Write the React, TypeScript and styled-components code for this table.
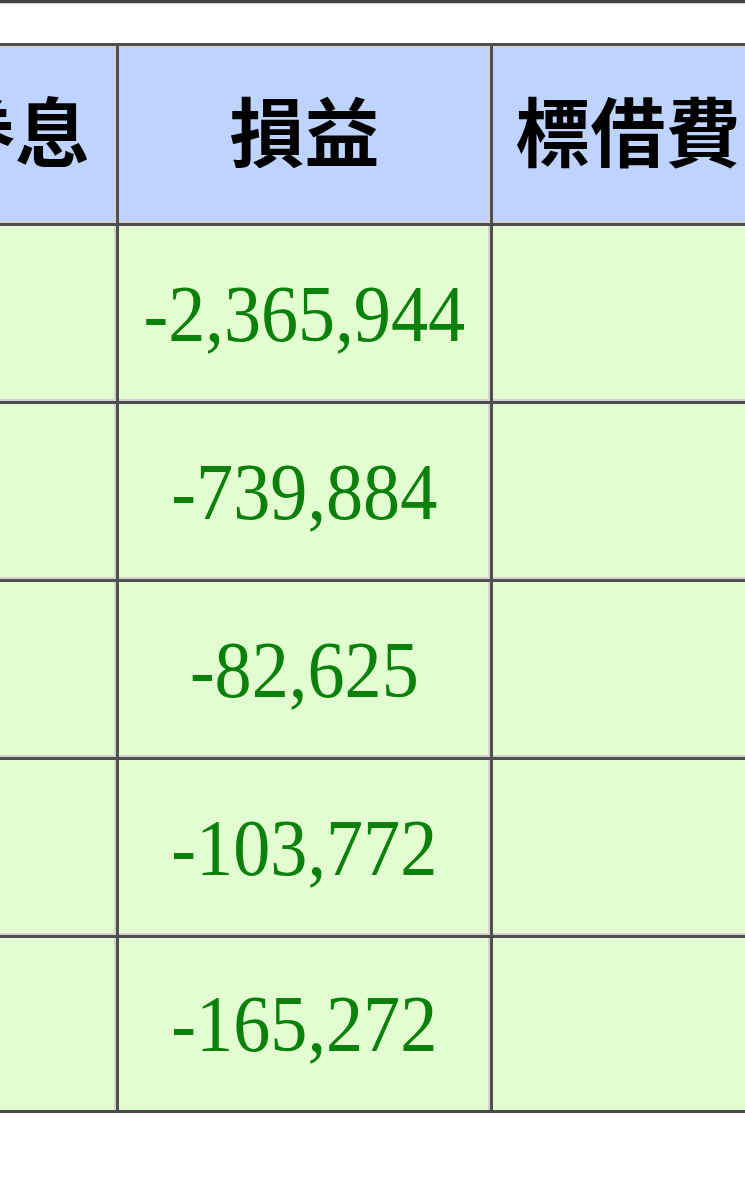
import React from "react";
import styled, { createGlobalStyle } from "styled-components";

const GlobalStyle = createGlobalStyle`
  html, body {
    margin: 0;
    padding: 0;
    background: #ffffff;
    overflow: hidden;
  }
`;

const Page = styled.div`
  display: flex;
  flex-direction: column;
  width: 745px;
  overflow: hidden;
`;

const TopRule = styled.div`
  height: 0;
  border-top: 3px solid #444444;
  box-shadow: 0 1px 0 #cfcfcf;
  margin-bottom: 40px;
`;

const Table = styled.table`
  border-collapse: separate;
  border-spacing: 0;
  table-layout: fixed;
  width: 852px;
  min-width: 852px;
  flex-shrink: 0;
  margin-left: -89px;
  border-bottom: 3px solid #4a4a4a;
  box-shadow: 0 2px 0 #d9d9d9;
`;

const Col = styled.col<{ $w: number }>`
  width: ${(p) => p.$w + 3}px;
`;

const cellBase = `
  border-left: 3px solid #4f4f4f;
  border-top: 3px solid #4f4f4f;
  box-shadow: inset -2px -2px 0 #d3d3d3;
  padding: 0;
  text-align: center;
  vertical-align: middle;
  white-space: nowrap;
  overflow: hidden;
`;

const HeadCell = styled.th`
  ${cellBase}
  height: 180px;
  box-sizing: border-box;
  padding-bottom: 12px;
  background: #bed3fe;
  color: #000000;
  font-family: "Noto Sans CJK TC", "Noto Sans CJK SC", sans-serif;
  font-weight: 700;
  font-size: 75px;
  line-height: 1;
  box-shadow: inset -2px -2px 0 #d3d3d3, inset 0 2px 0 #d3d3d3;
`;

const Row = styled.tr`
  &:last-child td {
    height: 172px;
    box-shadow: inset -2px 0 0 #d3d3d3;
  }
`;

const DataCell = styled.td`
  ${cellBase}
  height: 175px;
  background: #e2fdd0;
  color: #0b800b;
  font-family: "Liberation Serif", "Times New Roman", serif;
  font-size: 80px;
  line-height: 1;
`;

const Num = styled.span`
  display: inline-block;
  transform: scaleX(0.928);
  transform-origin: center;
`;

const headers = ["券息", "損益", "標借費"];
const values = ["-2,365,944", "-739,884", "-82,625", "-103,772", "-165,272"];

export default function App() {
  return (
    <>
      <GlobalStyle />
      <Page>
        <TopRule />
        <Table>
          <colgroup>
            <Col $w={202} />
            <Col $w={371} />
            <Col $w={270} />
          </colgroup>
          <thead>
            <tr>
              {headers.map((h) => (
                <HeadCell key={h}>{h}</HeadCell>
              ))}
            </tr>
          </thead>
          <tbody>
            {values.map((v) => (
              <Row key={v}>
                <DataCell />
                <DataCell>
                  <Num>{v}</Num>
                </DataCell>
                <DataCell />
              </Row>
            ))}
          </tbody>
        </Table>
      </Page>
    </>
  );
}
